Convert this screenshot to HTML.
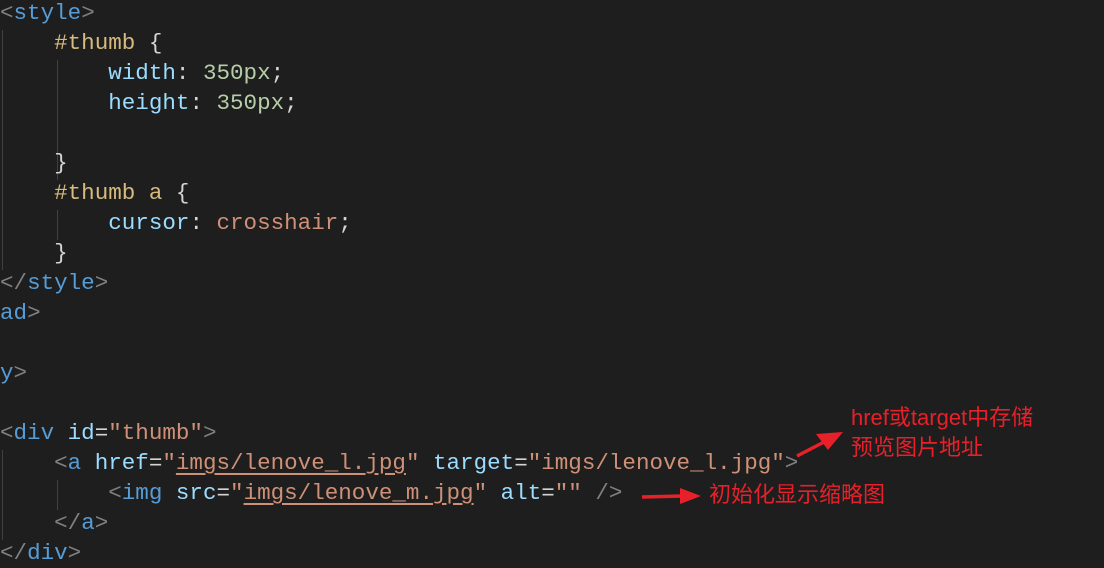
<!DOCTYPE html>
<html><head><meta charset="utf-8"><style>
html,body{margin:0;padding:0;background:#1e1e1e;width:1104px;height:568px;overflow:hidden;position:relative}
pre{margin:0;position:absolute;left:0;top:-2px;font-family:"Liberation Mono",monospace;font-size:22.55px;line-height:30px;color:#d4d4d4;white-space:pre}
.t{color:#808080}.n{color:#569cd6}.s{color:#d7ba7d}.p{color:#9cdcfe}.v{color:#b5cea8}.c{color:#ce9178}.a{color:#9cdcfe}
.u{text-decoration:underline;text-decoration-color:#ce9178;text-underline-offset:4px}
.g{position:absolute;width:1px;background:#404040}
.ann{position:absolute;font-family:"Liberation Sans","Noto Sans CJK SC",sans-serif;font-size:22px;color:#e8202a;line-height:30px}
</style></head><body>
<div class="g" style="left:2px;top:30px;height:240px"></div>
<div class="g" style="left:57px;top:60px;height:120px"></div>
<div class="g" style="left:57px;top:210px;height:30px"></div>
<div class="g" style="left:2px;top:450px;height:90px"></div>
<div class="g" style="left:57px;top:480px;height:30px"></div>
<pre><span class="t">&lt;</span><span class="n">style</span><span class="t">&gt;</span>
    <span class="s">#thumb</span> {
        <span class="p">width</span>: <span class="v">350px</span>;
        <span class="p">height</span>: <span class="v">350px</span>;

    }
    <span class="s">#thumb a</span> {
        <span class="p">cursor</span>: <span class="c">crosshair</span>;
    }
<span class="t">&lt;/</span><span class="n">style</span><span class="t">&gt;</span>
<span class="n">ad</span><span class="t">&gt;</span>

<span class="n">y</span><span class="t">&gt;</span>

<span class="t">&lt;</span><span class="n">div</span> <span class="a">id</span>=<span class="c">"thumb"</span><span class="t">&gt;</span>
    <span class="t">&lt;</span><span class="n">a</span> <span class="a">href</span>=<span class="c">"<span class="u">imgs/lenove_l.jpg</span>"</span> <span class="a">target</span>=<span class="c">"imgs/lenove_l.jpg"</span><span class="t">&gt;</span>
        <span class="t">&lt;</span><span class="n">img</span> <span class="a">src</span>=<span class="c">"<span class="u">imgs/lenove_m.jpg</span>"</span> <span class="a">alt</span>=<span class="c">""</span> <span class="t">/&gt;</span>
    <span class="t">&lt;/</span><span class="n">a</span><span class="t">&gt;</span>
<span class="t">&lt;/</span><span class="n">div</span><span class="t">&gt;</span></pre>
<div class="ann" style="left:851px;top:403px">href或target中存储</div>
<div class="ann" style="left:851px;top:433px">预览图片地址</div>
<div class="ann" style="left:709px;top:480px">初始化显示缩略图</div>
<svg style="position:absolute;left:0;top:0" width="1104" height="568">
<path d="M797 456 L826 441" stroke="#e8202a" stroke-width="3.5"/>
<polygon points="843,432 816,434 828,450" fill="#e8202a"/>
<path d="M642 497 L683 496" stroke="#e8202a" stroke-width="3.5"/>
<polygon points="701,496 680,488 680,504" fill="#e8202a"/>
</svg>
</body></html>
